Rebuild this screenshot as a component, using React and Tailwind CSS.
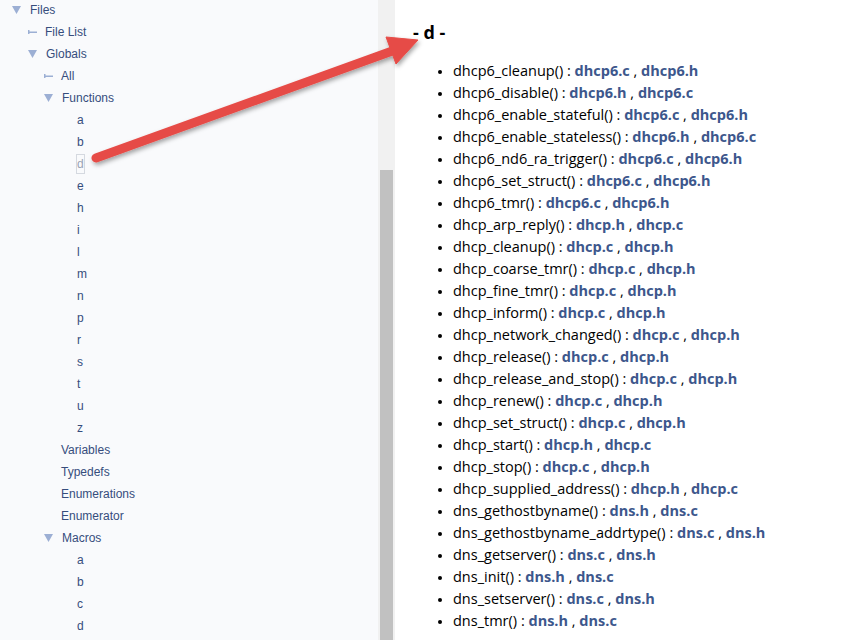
import React from 'react';

const tree = [
  { label: 'Files', level: 0, kind: 'open' },
  { label: 'File List', level: 1, kind: 'leaf' },
  { label: 'Globals', level: 1, kind: 'open' },
  { label: 'All', level: 2, kind: 'leaf' },
  { label: 'Functions', level: 2, kind: 'open' },
  ...'abdehilmnprstuz'.split('').map((c) => ({ label: c, level: 3, kind: 'none', sel: c === 'd' })),
  { label: 'Variables', level: 2, kind: 'none' },
  { label: 'Typedefs', level: 2, kind: 'none' },
  { label: 'Enumerations', level: 2, kind: 'none' },
  { label: 'Enumerator', level: 2, kind: 'none' },
  { label: 'Macros', level: 2, kind: 'open' },
  ...'abcd'.split('').map((c) => ({ label: c, level: 3, kind: 'none' })),
];

const funcs = [
  ['dhcp6_cleanup()', 'dhcp6.c', 'dhcp6.h'],
  ['dhcp6_disable()', 'dhcp6.h', 'dhcp6.c'],
  ['dhcp6_enable_stateful()', 'dhcp6.c', 'dhcp6.h'],
  ['dhcp6_enable_stateless()', 'dhcp6.h', 'dhcp6.c'],
  ['dhcp6_nd6_ra_trigger()', 'dhcp6.c', 'dhcp6.h'],
  ['dhcp6_set_struct()', 'dhcp6.c', 'dhcp6.h'],
  ['dhcp6_tmr()', 'dhcp6.c', 'dhcp6.h'],
  ['dhcp_arp_reply()', 'dhcp.h', 'dhcp.c'],
  ['dhcp_cleanup()', 'dhcp.c', 'dhcp.h'],
  ['dhcp_coarse_tmr()', 'dhcp.c', 'dhcp.h'],
  ['dhcp_fine_tmr()', 'dhcp.c', 'dhcp.h'],
  ['dhcp_inform()', 'dhcp.c', 'dhcp.h'],
  ['dhcp_network_changed()', 'dhcp.c', 'dhcp.h'],
  ['dhcp_release()', 'dhcp.c', 'dhcp.h'],
  ['dhcp_release_and_stop()', 'dhcp.c', 'dhcp.h'],
  ['dhcp_renew()', 'dhcp.c', 'dhcp.h'],
  ['dhcp_set_struct()', 'dhcp.c', 'dhcp.h'],
  ['dhcp_start()', 'dhcp.h', 'dhcp.c'],
  ['dhcp_stop()', 'dhcp.c', 'dhcp.h'],
  ['dhcp_supplied_address()', 'dhcp.h', 'dhcp.c'],
  ['dns_gethostbyname()', 'dns.h', 'dns.c'],
  ['dns_gethostbyname_addrtype()', 'dns.c', 'dns.h'],
  ['dns_getserver()', 'dns.c', 'dns.h'],
  ['dns_init()', 'dns.h', 'dns.c'],
  ['dns_setserver()', 'dns.c', 'dns.h'],
  ['dns_tmr()', 'dns.h', 'dns.c'],
];

const indent = ['pl-[12px]', 'pl-[28px]', 'pl-[44px]', 'pl-[60px]'];

function Marker({ kind }) {
  if (kind === 'open') {
    return (
      <svg width="9" height="8" viewBox="0 0 9 8" className="mr-[9px] shrink-0">
        <path d="M0 0 H9 L4.5 8 Z" fill="#9cafd4" />
      </svg>
    );
  }
  if (kind === 'leaf') {
    return (
      <svg width="9" height="8" viewBox="0 0 9 8" className="mr-[8px] shrink-0">
        <rect x="0" y="2" width="1.5" height="4" fill="#9cafd4" />
        <rect x="0" y="3.5" width="9" height="1.5" fill="#9cafd4" />
      </svg>
    );
  }
  return null;
}

export default function App() {
  return (
    <div className="relative flex h-[640px] w-[861px] overflow-hidden bg-white">
      {/* nav tree */}
      <div className="w-[378px] shrink-0 bg-[#f9fafc] text-[12px] text-[#364d7c] font-['Liberation_Sans',Arial,sans-serif]">
        <div className="-mt-[1px]">
          {tree.map((n, i) => (
            <div key={i} className={`flex h-[22px] items-center ${indent[n.level]} ${n.kind === 'none' && n.level === 2 ? 'pl-[61px]' : ''}`}>
              <Marker kind={n.kind} />
              {n.level === 3 ? (
                <span className={`ml-[17px] ${n.sel ? 'text-[#9aa3b5] outline outline-1 outline-[#d5d9e0]' : ''}`}>{n.label}</span>
              ) : (
                <span>{n.label}</span>
              )}
            </div>
          ))}
        </div>
      </div>

      {/* scrollbar */}
      <div className="flex w-[17px] shrink-0 flex-col bg-[#f1f1f1] pl-[2px] pr-[2px]">
        <div className="h-[170px]" />
        <div className="flex-1 bg-[#c1c1c1]" />
      </div>

      {/* contents */}
      <div className="flex-1 pl-[18px] pt-[21px] text-[14.5px] text-black font-['Open_Sans','Noto_Sans',sans-serif]">
        <h3 className="text-[18px] font-bold leading-[22px]">- d -</h3>
        <ul className="mt-[17px] list-disc pl-[40px] marker:text-[12px]">
          {funcs.map(([name, a, b]) => (
            <li key={name} className="h-[22px] leading-[22px]">
              {name} : <b className="text-[#3d578c]">{a}</b> , <b className="text-[#3d578c]">{b}</b>
            </li>
          ))}
        </ul>
      </div>

      {/* annotation arrow */}
      <svg className="pointer-events-none absolute left-0 top-0" width="861" height="640">
        <defs>
          <filter id="sh" x="-10%" y="-10%" width="120%" height="130%">
            <feDropShadow dx="1.5" dy="2.5" stdDeviation="2" floodColor="#000" floodOpacity="0.35" />
          </filter>
        </defs>
        <g filter="url(#sh)" fill="#e64c47" stroke="#e64c47">
          <line x1="96" y1="158" x2="395" y2="50" strokeWidth="9" strokeLinecap="round" />
          <path d="M418 40 L386 37 L396 64 Z" strokeWidth="1" strokeLinejoin="round" />
        </g>
      </svg>
    </div>
  );
}
